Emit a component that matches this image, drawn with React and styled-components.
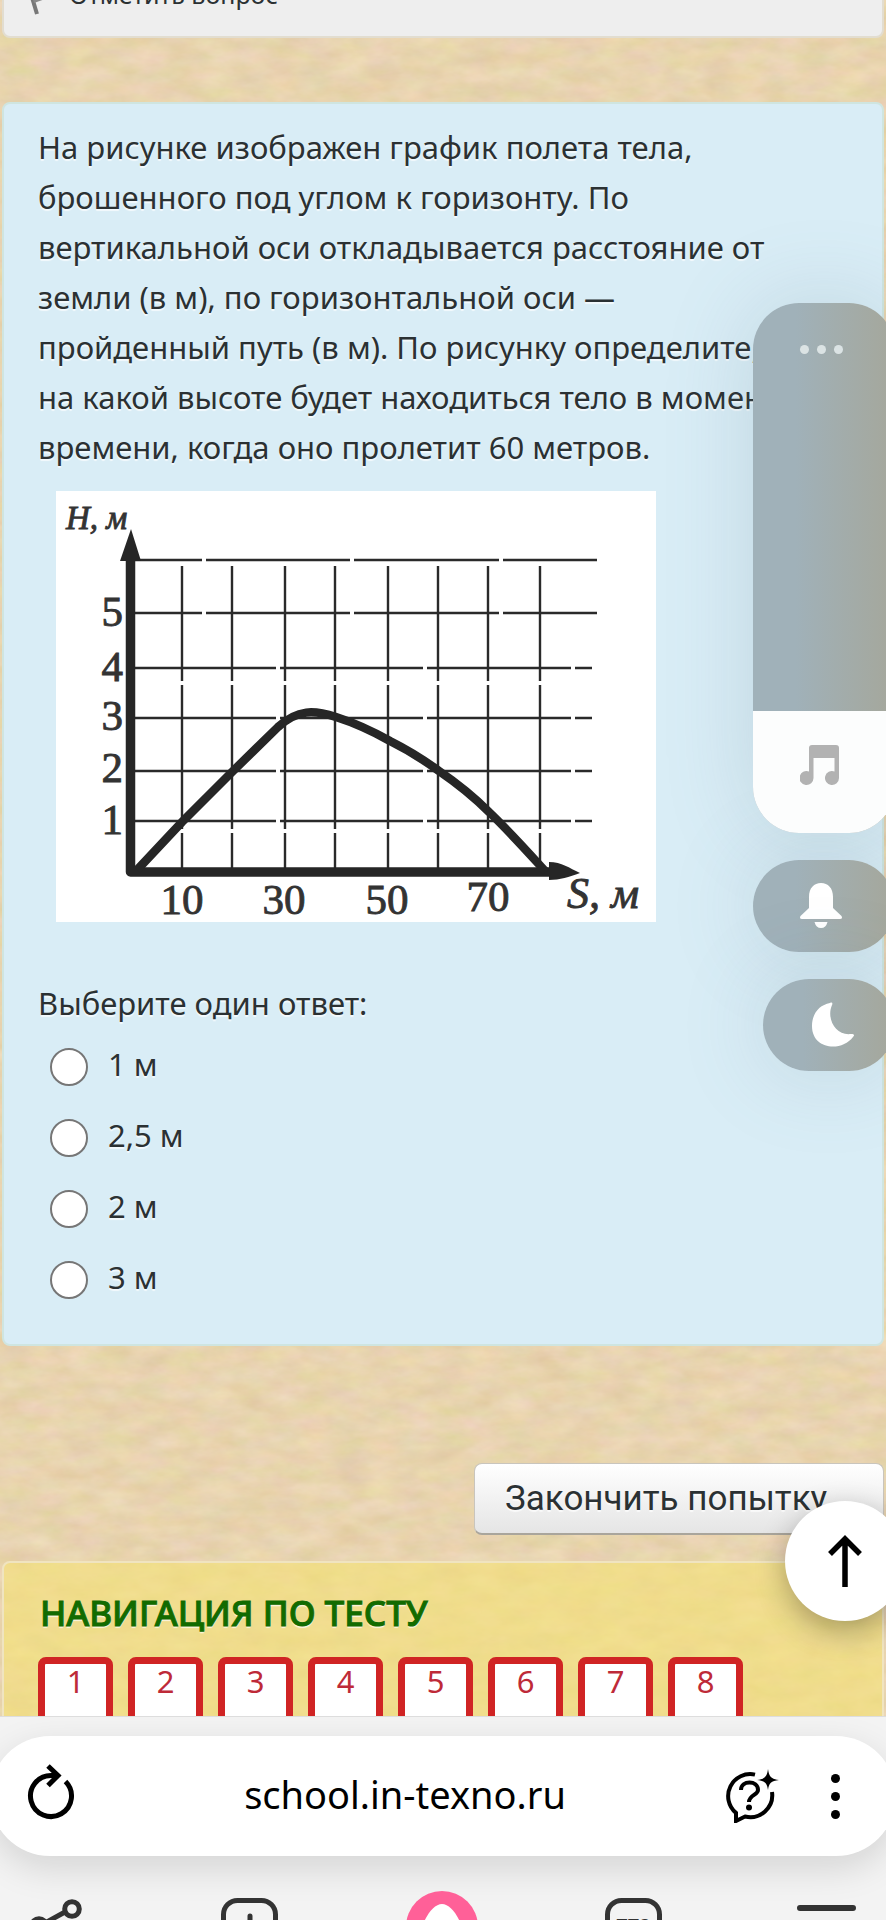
import React, { useState } from "react";
import styled, { createGlobalStyle } from "styled-components";

const GlobalStyle = createGlobalStyle`
  * {
    box-sizing: border-box;
  }

  body {
    margin: 0;
    color: #2b3133;
    font-family: "Noto Sans", "Open Sans", sans-serif;
    font-size: 31px;
    line-height: 50px;
  }

  button {
    padding: 0;
    border: none;
    background: none;
    font: inherit;
    color: inherit;
  }
`;

const Screen = styled.div`
  position: relative;
  display: flex;
  flex-direction: column;
  height: 100vh;
  overflow: hidden;
`;

const Main = styled.main`
  position: relative;
  flex: 1;
  min-height: 0;
  padding: 0 2px;
  overflow: hidden;
  background: #e7d3ae;
`;

const Sand = styled.svg`
  position: absolute;
  top: 0;
  left: 0;
  width: 100%;
  height: 100%;
`;

const FlagPanel = styled.section`
  position: relative;
  display: flex;
  gap: 5px;
  margin-top: -60px;
  padding: 34px 12px 24px;
  border: 2px solid #e2ddd0;
  border-radius: 8px;
  background: #eeeeee;
  font-size: 25px;
  line-height: 36px;
`;

const FlagIcon = styled.svg`
  width: 48px;
  height: 40px;
  margin-bottom: -4px;
`;

const Question = styled.section`
  position: relative;
  margin-top: 64px;
  padding: 18px 84px 42px 34px;
  border: 2px solid #cfe5e0;
  border-radius: 8px;
  background: #d9edf6;
  text-shadow: 0 2px 1px rgba(255, 255, 255, 0.7);
`;

const QuestionText = styled.p`
  margin: 0;
`;

const Chart = styled.svg`
  display: block;
  width: 600px;
  max-width: 100%;
  margin: 19px 0 56px 18px;
  background: #fff;
  font-family: "Liberation Serif", serif;
  text-shadow: none;
`;

const Answers = styled.fieldset`
  display: flex;
  flex-direction: column;
  gap: 21px;
  margin: 0;
  padding: 0;
  border: none;
`;

const Prompt = styled.legend`
  padding: 0;
  margin-bottom: 11px;
`;

const Answer = styled.label`
  display: flex;
  gap: 20px;
  padding-left: 12px;
`;

const Radio = styled.input`
  appearance: none;
  width: 38px;
  height: 38px;
  margin: 9px 0 0;
  border: 2px solid #767676;
  border-radius: 50%;
  background: #fff;

  &:checked {
    background: radial-gradient(#1a73e8 50%, #fff 52%);
  }
`;

const Actions = styled.div`
  position: relative;
  display: flex;
  justify-content: flex-end;
  margin-top: 117px;
`;

const FinishButton = styled.button`
  height: 72px;
  padding: 0 30px;
  border: 1px solid #c9c5bd;
  border-bottom: 2px solid #a9a59c;
  border-radius: 8px;
  background: linear-gradient(#ffffff, #e5e5e5);
  font-family: Roboto, sans-serif;
  font-size: 35px;
  text-shadow: 0 2px 1px rgba(255, 255, 255, 0.7);
`;

const Navigation = styled.nav`
  position: relative;
  margin-top: 26px;
  padding: 26px 34px 60px;
  border: 2px solid #f0e4c0;
  border-radius: 8px;
  background: rgba(245, 227, 112, 0.55);
`;

const NavTitle = styled.h2`
  margin: 0 0 20px 2px;
  color: #126b00;
  font-size: 35px;
  font-weight: 500;
  line-height: 48px;
  text-shadow: 0 2px 1px rgba(255, 255, 255, 0.7);
  -webkit-text-stroke: 1px #126b00;
`;

const NavList = styled.div`
  display: flex;
  flex-wrap: wrap;
  gap: 15px;
`;

const NavButton = styled.button`
  width: 75px;
  height: 100px;
  padding-bottom: 52px;
  border: 7px solid #d02424;
  border-radius: 8px;
  background: #fff;
  color: #be2a38;
  line-height: 34px;
`;

const VolumeStack = styled.aside`
  position: absolute;
  top: 303px;
  right: -9px;
  display: flex;
  flex-direction: column;
  align-items: flex-end;
  gap: 27px;
  width: 142px;
`;

const glass = "linear-gradient(to right, #a0b1b9 30%, #a5a79b)";
const glow = "0 0 90px rgba(90, 120, 140, 0.2)";

const VolumePanel = styled.div`
  position: relative;
  display: flex;
  flex-direction: column;
  align-items: center;
  justify-content: space-between;
  width: 100%;
  height: 530px;
  border-radius: 46px;
  overflow: hidden;
  background: ${glass};
`;

const VolumeShadow = styled.div`
  width: 100%;
  border-radius: 46px;
  box-shadow: ${glow};
`;

const VolumeRange = styled.input`
  position: absolute;
  inset: 90px 0 0;
  width: 100%;
  height: 440px;
  margin: 0;
  opacity: 0;
  writing-mode: vertical-lr;
  direction: rtl;
`;

const MoreButton = styled.button`
  display: flex;
  gap: 8px;
  padding: 42px 6px 20px 0;
`;

const Dot = styled.span`
  width: 9px;
  height: 9px;
  border-radius: 50%;
  background: #dbe3e4;
`;

const VolumeLevel = styled.div`
  display: flex;
  justify-content: center;
  width: 100%;
  padding: 34px 8px 0 0;
  background: #fcfdfd;
`;

const Pill = styled.button`
  display: flex;
  align-items: center;
  justify-content: center;
  width: ${(p) => (p.$narrow ? "132px" : "100%")};
  height: 92px;
  padding: ${(p) => (p.$narrow ? "0 0 0 7px" : "0 7px 0 0")};
  border-radius: 46px;
  background: ${glass};
  box-shadow: ${glow};
`;

const UpButton = styled.button`
  position: absolute;
  right: -19px;
  bottom: 95px;
  display: flex;
  align-items: center;
  justify-content: center;
  width: 120px;
  height: 120px;
  border-radius: 50%;
  background: #fff;
  box-shadow: 0 10px 30px rgba(0, 0, 0, 0.3);
`;

const BrowserBar = styled.footer`
  position: relative;
  flex: none;
  height: 204px;
  border-top: 1px solid #dddddd;
  background: #f3f3f3;
  overflow: hidden;
`;

const AddressBar = styled.div`
  display: flex;
  align-items: center;
  height: 120px;
  margin: 19px -10px 34px;
  padding: 0 46px 0 37px;
  border-radius: 60px;
  background: #fff;
  box-shadow: 0 12px 36px rgba(0, 0, 0, 0.13);
`;

const IconButton = styled.button`
  display: flex;
  flex: none;
  color: #000;
`;

const Address = styled.input`
  flex: 1;
  min-width: 0;
  height: 60px;
  margin: 0 0 4px 10px;
  padding: 0;
  border: none;
  outline: none;
  background: none;
  color: #000;
  font: inherit;
  font-size: 38px;
  text-align: center;
`;

const MenuButton = styled(IconButton)`
  flex-direction: column;
  align-items: center;
  gap: 9px;
  width: 30px;
  margin-left: 41px;
`;

const MenuDot = styled(Dot)`
  background: #000;
`;

const Toolbar = styled.div`
  display: flex;
  justify-content: space-between;
  padding: 0 27px 0 23px;
`;

const ToolButton = styled.button`
  display: flex;
  width: 64px;
  height: 64px;
  color: #333;
`;

const columns = [182, 232, 285, 335, 388, 438, 488, 540];
const rows = [
  { y: 560, end: 597, gaps: [204, 352, 501] },
  { y: 613, end: 597, gaps: [204, 352, 501] },
  { y: 668, end: 592, gaps: [278, 425, 573] },
  { y: 718, end: 592, gaps: [278, 425, 573] },
  { y: 771, end: 592, gaps: [278, 425, 573] },
  { y: 821, end: 592, gaps: [278, 425, 573] },
];

const yLabels = [
  ["5", 626],
  ["4", 681],
  ["3", 730],
  ["2", 782],
  ["1", 834],
];
const xLabels = [
  ["10", 182, 914],
  ["30", 284, 914],
  ["50", 387, 914],
  ["70", 488, 911],
];

const FlightChart = () => (
  <Chart viewBox="56 491 600 431" role="img" aria-label="График полета тела">
    <g stroke="#2a2a2a" strokeWidth="2.4">
      {columns.map((x) => (
        <path key={x} d={`M${x} 566V681M${x} 685V829M${x} 833V870`} />
      ))}
      {rows.map((r) => (
        <path
          key={r.y}
          d={`M134 ${r.y}H${r.gaps[0] - 2}M${r.gaps[0] + 2} ${r.y}H${r.gaps[1] - 2}M${r.gaps[1] + 2} ${r.y}H${r.gaps[2] - 2}M${r.gaps[2] + 2} ${r.y}H${r.end}`}
        />
      ))}
    </g>
    <path d="M130.500 552V872H556" fill="none" stroke="#262626" strokeWidth="9.500" strokeLinejoin="round" />
    <path d="M131 529L141 561H120Z" fill="#262626" />
    <path d="M549 862C562 862 569 868 580 873C569 877 560 880 549 880Z" fill="#262626" />
    <path
      d="M137 870L182 822L232 772L278 727C298 709 314 710 336 717C358 724 374 732 390 741C408 750 424 760 439 771C458 784 473 796 489 812C510 832 526 850 546 872"
      fill="none"
      stroke="#262626"
      strokeWidth="8.500"
    />
    <g fill="#333" stroke="#333" strokeWidth="0.9" fontSize="43">
      {yLabels.map(([t, y]) => (
        <text key={t} x="123" y={y} textAnchor="end">{t}</text>
      ))}
      {xLabels.map(([t, x, y]) => (
        <text key={t} x={x} y={y} textAnchor="middle">{t}</text>
      ))}
      <text x="66" y="529" fontSize="33" fontStyle="italic">H, м</text>
      <text x="567" y="908" fontSize="44" fontStyle="italic">S, м</text>
    </g>
  </Chart>
);

const answers = ["1 м", "2,5 м", "2 м", "3 м"];
const questions = [1, 2, 3, 4, 5, 6, 7, 8];

const App = () => {
  const [answer, setAnswer] = useState("");
  const [volume, setVolume] = useState(24);

  return (
    <Screen>
      <GlobalStyle />
      <Main>
        <Sand aria-hidden="true">
          <filter id="sand" x="0" y="0" width="100%" height="100%" colorInterpolationFilters="sRGB">
            <feTurbulence type="fractalNoise" baseFrequency="0.03 0.06" numOctaves="4" seed="4" />
            <feColorMatrix
              values="0.08 0    0    0 0.87
                      0.05 0.07 0    0 0.77
                      0.09 0    0.10 0 0.59
                      0    0    0    0 1"
            />
          </filter>
          <rect width="100%" height="100%" filter="url(#sand)" />
        </Sand>

        <FlagPanel>
          <FlagIcon viewBox="0 0 48 40">
            <path d="M12 8L21 38" stroke="#777" strokeWidth="4" />
            <path d="M13 10L30 4L32 22L18 27Z" fill="#888" />
          </FlagIcon>
          <span>Отметить вопрос</span>
        </FlagPanel>

        <Question>
          <QuestionText>
            На рисунке изображен график полета тела, брошенного под углом к
            горизонту. По вертикальной оси откладывается расстояние от земли
            (в м), по горизонтальной оси — пройденный путь (в м). По рисунку
            определите, на какой высоте будет находиться тело в момент
            времени, когда оно пролетит 60 метров.
          </QuestionText>
          <FlightChart />
          <Answers>
            <Prompt>Выберите один ответ:</Prompt>
            {answers.map((text) => (
              <Answer key={text}>
                <Radio
                  type="radio"
                  name="answer"
                  value={text}
                  checked={answer === text}
                  onChange={(event) => setAnswer(event.target.value)}
                />
                {text}
              </Answer>
            ))}
          </Answers>
        </Question>

        <Actions>
          <FinishButton type="button">Закончить попытку...</FinishButton>
        </Actions>

        <Navigation>
          <NavTitle>НАВИГАЦИЯ ПО ТЕСТУ</NavTitle>
          <NavList>
            {questions.map((n) => (
              <NavButton type="button" key={n}>{n}</NavButton>
            ))}
          </NavList>
        </Navigation>

        <UpButton type="button" aria-label="Наверх">
          <svg width="40" height="54" viewBox="0 0 40 54" fill="none" stroke="#000" strokeWidth="5.500">
            <path d="M20 53V6M5 20L20 5L35 20" />
          </svg>
        </UpButton>
      </Main>

      <VolumeStack>
        <VolumeShadow>
          <VolumePanel>
            <MoreButton type="button" aria-label="Ещё">
              <Dot />
              <Dot />
              <Dot />
            </MoreButton>
            <VolumeLevel style={{ height: `${volume - 1}%` }}>
              <svg width="40" height="42" viewBox="0 0 40 42" fill="#b2b2b2">
                <path d="M9 3Q9 0 12 0H36Q39 0 39 3V33A7 7 0 1 1 34.500 26.500V13H13.500V33A7 7 0 1 1 9 26.500Z" />
              </svg>
            </VolumeLevel>
            <VolumeRange
              type="range"
              aria-label="Громкость"
              value={volume}
              onChange={(event) => setVolume(Number(event.target.value))}
            />
          </VolumePanel>
        </VolumeShadow>
        <Pill type="button" aria-label="Звонок">
          <svg width="44" height="46" viewBox="0 0 44 46" fill="#fff">
            <path d="M10 14C10 5 15 0 22 0S34 5 34 14V25L42.500 33Q44 36 41 36H3Q0 36 1.500 33L10 25Z" />
            <path d="M15.500 39H28.500Q27 45 22 45T15.500 39Z" />
          </svg>
        </Pill>
        <Pill type="button" aria-label="Не беспокоить" $narrow>
          <svg width="44" height="46" viewBox="0 0 44 46" fill="#fff">
            <path d="M19 1C21 0 22 1 21 3C15 17 25 34 40 32C43 32 44 33 42 35C31 50 1 48 1 24C1 12 8 3 19 1Z" />
          </svg>
        </Pill>
      </VolumeStack>

      <BrowserBar>
        <AddressBar>
          <IconButton type="button" aria-label="Обновить">
            <svg width="48" height="48" viewBox="0 0 48 48" fill="none" stroke="currentColor" strokeWidth="5" overflow="visible">
              <path d="M38.500 9.500A20.500 20.500 0 1 1 24 3.500H31" />
              <path d="M21 -6L31 3.500L21 13.500" />
            </svg>
          </IconButton>
          <Address aria-label="Адрес" defaultValue="school.in-texno.ru" />
          <IconButton type="button" aria-label="Спросить">
            <svg width="54" height="54" viewBox="0 0 54 54" fill="none" stroke="currentColor" strokeWidth="4">
              <path d="M30 5.600A22 22 0 0 0 11 43.900V52L20 47.500A22 22 0 0 0 47 23" />
              <path d="M16 21C16 11 33 11 33 21C33 26 24 26 24 33" />
              <circle cx="24" cy="38.500" r="3" fill="currentColor" stroke="none" />
              <path d="M43 0C44 7.500 46 10 54 11C46 12 44 14 43 21C42 14 40 12 32 11C40 10 42 7.500 43 0Z" fill="currentColor" stroke="none" />
            </svg>
          </IconButton>
          <MenuButton type="button" aria-label="Меню страницы">
            <MenuDot />
            <MenuDot />
            <MenuDot />
          </MenuButton>
        </AddressBar>

        <Toolbar>
          <ToolButton type="button" aria-label="Поделиться">
            <svg width="64" height="64" fill="none" stroke="currentColor" strokeWidth="5">
              <circle cx="49" cy="19" r="7.300" />
              <circle cx="16" cy="36" r="7.300" />
              <circle cx="49" cy="54" r="7.300" />
              <path d="M42 22L22 33M22 39L42 50" />
            </svg>
          </ToolButton>
          <ToolButton type="button" aria-label="Новая вкладка">
            <svg width="64" height="64" fill="none" stroke="currentColor" strokeWidth="5" strokeLinecap="round">
              <rect x="7.500" y="10.500" width="52" height="52" rx="14" />
              <path d="M34 26V48M23 37H45" />
            </svg>
          </ToolButton>
          <ToolButton type="button" aria-label="Алиса">
            <svg width="64" height="64" overflow="visible">
              <circle cx="33" cy="37" r="36" fill="#ff6098" />
              <path d="M12 40C16 26 25 14 33 14S50 26 54 40Z" fill="#fff" />
            </svg>
          </ToolButton>
          <ToolButton type="button" aria-label="Вкладки">
            <svg width="64" height="64">
              <rect x="5.500" y="10.500" width="52" height="52" rx="14" fill="none" stroke="currentColor" strokeWidth="5" />
              <text x="31.500" y="43" fontSize="20" fontWeight="700" textAnchor="middle" fill="currentColor">779</text>
            </svg>
          </ToolButton>
          <ToolButton type="button" aria-label="Меню">
            <svg width="64" height="64" stroke="currentColor" strokeWidth="6" strokeLinecap="round">
              <path d="M5 18H58M5 36H58M5 54H58" />
            </svg>
          </ToolButton>
        </Toolbar>
      </BrowserBar>
    </Screen>
  );
};

export default App;
